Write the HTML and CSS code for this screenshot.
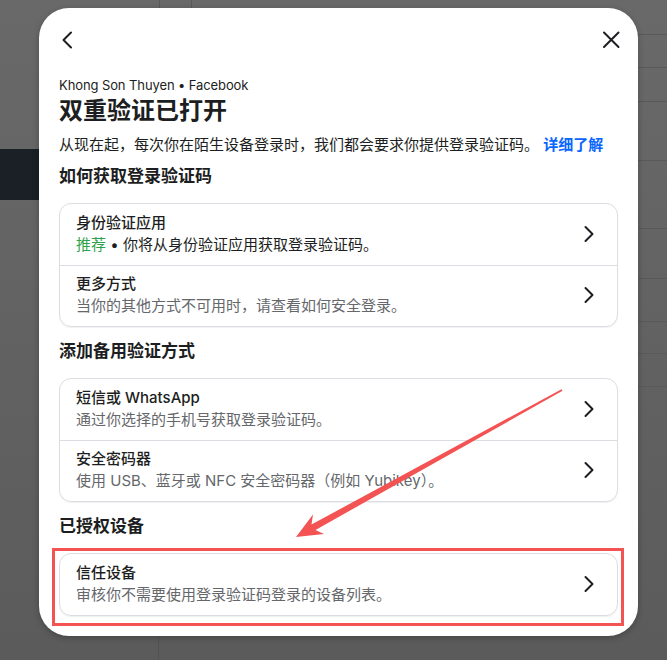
FILE: index.html
```html
<!DOCTYPE html>
<html lang="zh-CN">
<head>
    <meta charset="UTF-8">
    <meta name="viewport" content="width=device-width, initial-scale=1.0">
    <title>双重验证已打开</title>
    <link rel="stylesheet" href="styles.css">
</head>
<body>
    <div class="dialog">
        <div class="dialog-top">
            <span class="icon-btn back">
                <svg width="24" height="24" viewBox="0 0 24 24"><path d="M17 4.5 L9.5 12 L17 19.5" /></svg>
            </span>
            <span class="icon-btn close">
                <svg width="24" height="24" viewBox="0 0 24 24"><path d="M5 4.5 L19.5 19 M19.5 4.5 L5 19" /></svg>
            </span>
        </div>

        <div class="account">Khong Son Thuyen • Facebook</div>
        <h1 class="title">双重验证已打开</h1>
        <p class="intro">从现在起，每次你在陌生设备登录时，我们都会要求你提供登录验证码。 <a href="#">详细了解</a></p>

        <h2 class="section-title">如何获取登录验证码</h2>
        <div class="card">
            <div class="row">
                <div class="row-text">
                    <div class="row-title">身份验证应用</div>
                    <div class="row-sub dark"><span class="tag">推荐</span> • 你将从身份验证应用获取登录验证码。</div>
                </div>
                <svg class="chevron" width="24" height="24" viewBox="0 0 24 24"><path d="M8.5 5 L15.5 12 L8.5 19" /></svg>
            </div>
            <div class="row">
                <div class="row-text">
                    <div class="row-title">更多方式</div>
                    <div class="row-sub">当你的其他方式不可用时，请查看如何安全登录。</div>
                </div>
                <svg class="chevron" width="24" height="24" viewBox="0 0 24 24"><path d="M8.5 5 L15.5 12 L8.5 19" /></svg>
            </div>
        </div>

        <h2 class="section-title">添加备用验证方式</h2>
        <div class="card">
            <div class="row">
                <div class="row-text">
                    <div class="row-title">短信或 WhatsApp</div>
                    <div class="row-sub">通过你选择的手机号获取登录验证码。</div>
                </div>
                <svg class="chevron" width="24" height="24" viewBox="0 0 24 24"><path d="M8.5 5 L15.5 12 L8.5 19" /></svg>
            </div>
            <div class="row">
                <div class="row-text">
                    <div class="row-title">安全密码器</div>
                    <div class="row-sub">使用 USB、蓝牙或 NFC 安全密码器（例如 Yubikey）。</div>
                </div>
                <svg class="chevron" width="24" height="24" viewBox="0 0 24 24"><path d="M8.5 5 L15.5 12 L8.5 19" /></svg>
            </div>
        </div>

        <h2 class="section-title">已授权设备</h2>
        <div class="card marked">
            <div class="row">
                <div class="row-text">
                    <div class="row-title">信任设备</div>
                    <div class="row-sub">审核你不需要使用登录验证码登录的设备列表。</div>
                </div>
                <svg class="chevron" width="24" height="24" viewBox="0 0 24 24"><path d="M8.5 5 L15.5 12 L8.5 19" /></svg>
            </div>
            <span class="callout"></span>
        </div>
    </div>

    <!-- annotation arrow drawn over the screenshot -->
    <svg class="arrow" width="667" height="660" viewBox="0 0 667 660">
        <polygon points="296,537 324,534 315.5,530 562.5,390.8 561.5,389.2 311.5,524.5 313,514.5" />
    </svg>
</body>
</html>
```

FILE: styles.css
```css
body {
    margin: 0;
    padding-top: 8px;
    height: 660px;
    box-sizing: border-box;
    overflow: hidden;
    position: relative;
    font-family: 'Inter', 'Noto Sans CJK SC', sans-serif;
    color: #1c1e21;
    background:
        linear-gradient(#1b2027, #1b2027) 0 149px / 39px 51px no-repeat,
        linear-gradient(#595959, #595959) 638px 34px / 29px 1px no-repeat,
        linear-gradient(#595959, #595959) 638px 67px / 29px 1px no-repeat,
        linear-gradient(#595959, #595959) 638px 101px / 29px 1px no-repeat,
        linear-gradient(#595959, #595959) 638px 160px / 29px 1px no-repeat,
        linear-gradient(#595959, #595959) 638px 228px / 29px 1px no-repeat,
        linear-gradient(#595959, #595959) 638px 278px / 29px 1px no-repeat,
        linear-gradient(#595959, #595959) 638px 321px / 29px 1px no-repeat,
        linear-gradient(#595959, #595959) 638px 353px / 29px 1px no-repeat,
        linear-gradient(#595959, #595959) 638px 386px / 29px 1px no-repeat,
        linear-gradient(#5a5a5a, #5a5a5a) 159px 0 / 1px 8px no-repeat,
        linear-gradient(#5a5a5a, #5a5a5a) 191px 0 / 1px 8px no-repeat,
        linear-gradient(#525252, #525252) 158px 636px / 1px 24px no-repeat,
        linear-gradient(#696969, #5b5b5b);
}

.dialog {
    width: 599px;
    margin-left: 39px;
    padding: 20px;
    box-sizing: border-box;
    background: #fff;
    border-radius: 30px;
    box-shadow: 0 2px 6px rgba(0, 0, 0, 0.25);
}

.dialog-top {
    display: flex;
    justify-content: space-between;
    height: 24px;
}

.icon-btn svg {
    display: block;
    fill: none;
    stroke: #1c1e21;
    stroke-width: 2;
    stroke-linecap: round;
    stroke-linejoin: round;
}
.back { margin-left: -5px; }
.close { margin-right: -5px; }

.account {
    margin-top: 24px;
    font-size: 13px;
    line-height: 18px;
    letter-spacing: -0.1px;
}

.title {
    margin: 2px 0 0;
    font-size: 24px;
    line-height: 30px;
    font-weight: 700;
}

.intro {
    margin: 8px 0 0;
    font-size: 15px;
    line-height: 22px;
}
.intro a {
    color: #0866ff;
    font-weight: 700;
    text-decoration: none;
}

.section-title {
    margin: 9px 0 16px;
    font-size: 17px;
    line-height: 22px;
    font-weight: 700;
}
.card + .section-title {
    margin-top: 13px;
}

.card {
    border: 1px solid #dadde1;
    border-radius: 12px;
    box-shadow: 0 1px 1px rgba(0, 0, 0, 0.06);
}

.row {
    display: flex;
    align-items: center;
    padding: 8px 16px 9px;
}
.row + .row {
    border-top: 1px solid #dadde1;
    padding-top: 7px;
}

.row-text {
    flex: 1;
}
.row-title {
    font-size: 15px;
    line-height: 22px;
    font-weight: 500;
}
.row-sub {
    font-size: 15px;
    line-height: 22px;
    color: #65676b;
}
.row-sub.dark {
    color: #1c1e21;
}
.tag {
    color: #31a24c;
}

.chevron {
    fill: none;
    stroke: #1c1e21;
    stroke-width: 2;
    stroke-linecap: round;
    stroke-linejoin: round;
}

.marked {
    position: relative;
}
.callout {
    position: absolute;
    top: -6px;
    left: -8px;
    right: -7px;
    bottom: -11px;
    border: 3px solid #f35353;
}

.arrow {
    position: absolute;
    top: 0;
    left: 0;
    pointer-events: none;
}
.arrow polygon {
    fill: #f35353;
}
```
